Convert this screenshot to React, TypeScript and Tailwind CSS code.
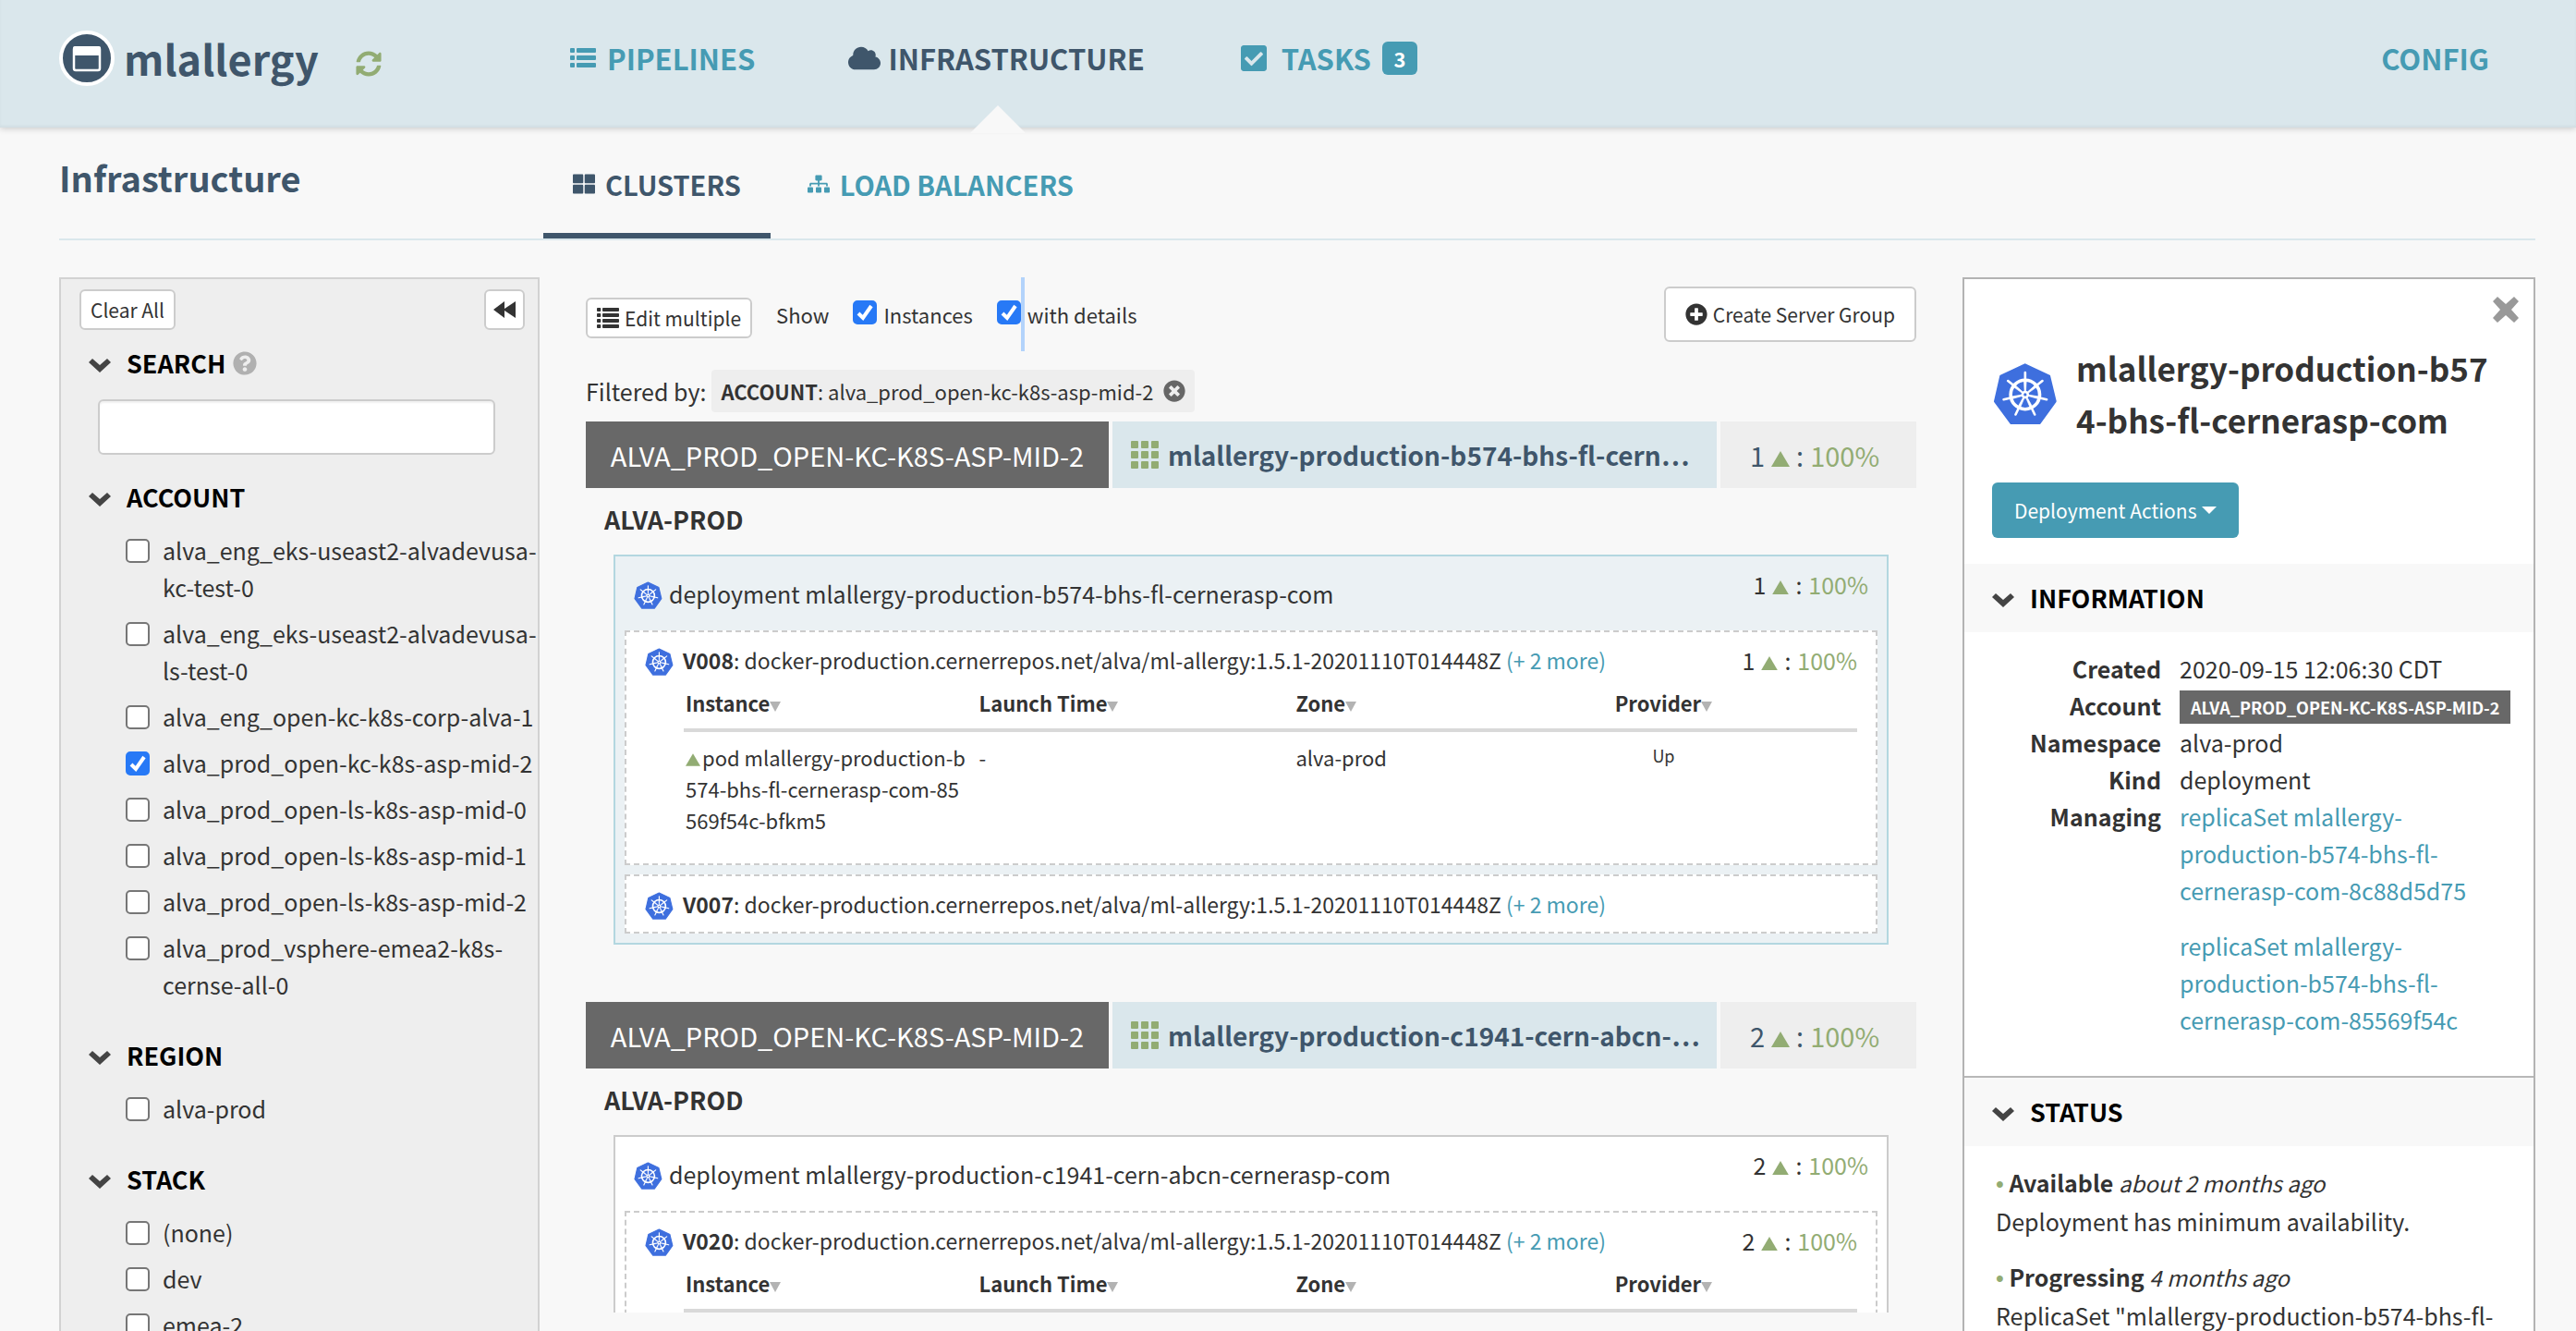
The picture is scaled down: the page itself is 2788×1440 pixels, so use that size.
import React from "react";
import { FaCheckSquare, FaCloud, FaPlusCircle, FaQuestionCircle, FaSitemap, FaSyncAlt, FaThLarge, FaTimesCircle } from "react-icons/fa";

function KubeIcon({ className }: { className: string }) {
  const spokes = [0, 1, 2, 3, 4, 5, 6].map((i) => (i * 360) / 7);
  return (
    <svg viewBox="50 62 214 206" className={className} aria-hidden="true">
      <path
        d="M156 69 L236 107 L256 190 L204 262 L110 262 L57 190 L76 107 Z"
        fill="#3e6fde"
        stroke="#3e6fde"
        strokeWidth="8"
        strokeLinejoin="round"
      />
      <circle cx="156.500" cy="168" r="48" fill="none" stroke="#fff" strokeWidth="11" />
      {spokes.map((a) => (
        <g key={a} transform={`rotate(${a} 156.5 168)`}>
          <path d="M152.500 122 L160.500 122 L158.500 160 L154.500 160 Z" fill="#fff" stroke="#fff" strokeWidth="2" />
          <path d="M156.500 122 L156.500 95" stroke="#fff" strokeWidth="8" strokeLinecap="round" />
        </g>
      ))}
      <circle cx="156.500" cy="168" r="13" fill="#fff" />
      <circle cx="156.500" cy="168" r="5" fill="#3e6fde" />
    </svg>
  );
}

function Chevron() {
  return (
    <svg viewBox="0 0 24 20" className="h-5 w-6 shrink-0" fill="#444" aria-hidden="true">
      <path d="M0 9 L4 5 L12 12 L20 5 L24 9 L12 20 Z" />
    </svg>
  );
}

function ListIcon({ rows, className }: { rows: number; className: string }) {
  const pitch = rows === 3 ? 8 : 6;
  const bar = rows === 3 ? 5 : 4;
  return (
    <svg viewBox="0 0 28 22" preserveAspectRatio="none" className={className} fill="currentColor" aria-hidden="true">
      {Array.from({ length: rows }, (_, i) => (
        <g key={i}>
          <rect x="0" y={i * pitch} width="5" height={bar} rx="1" />
          <rect x="7" y={i * pitch} width="21" height={bar} rx="1" />
        </g>
      ))}
    </svg>
  );
}

function GridIcon() {
  return (
    <svg viewBox="0 0 30 30" className="size-[30px] shrink-0" fill="#92ac73" aria-hidden="true">
      {[0, 11, 22].map((y) => [0, 11, 22].map((x) => <rect key={`${x}-${y}`} x={x} y={y} width="8" height="8" rx="1" />))}
    </svg>
  );
}

function Triangle({ className }: { className: string }) {
  return (
    <svg viewBox="0 0 20 17" className={className} fill="#92ac73" aria-hidden="true">
      <path d="M10 0 L20 17 L0 17 Z" />
    </svg>
  );
}

function Check({ id, checked = false }: { id: string; checked?: boolean }) {
  return (
    <span className="relative block h-[26px] w-[26px] shrink-0">
      <input
        id={id}
        type="checkbox"
        defaultChecked={checked}
        className="peer block h-[26px] w-[26px] appearance-none rounded-[5px] border-2 border-[#767676] bg-white checked:border-[#2779f6] checked:bg-[#2779f6]"
      />
      <svg viewBox="0 0 26 26" className="pointer-events-none absolute inset-0 hidden size-[26px] peer-checked:block" aria-hidden="true">
        <path d="M6 14 L11 19 L20 6" fill="none" stroke="#fff" strokeWidth="4" />
      </svg>
    </span>
  );
}

function FilterSection({ title, children }: { title: string; children: React.ReactNode }) {
  return (
    <section className="pb-8">
      <SectionTitle title={title} />
      <div className="pt-3 pl-[70px]">{children}</div>
    </section>
  );
}

function SectionTitle({ title, children }: { title: string; children?: React.ReactNode }) {
  return (
    <h3 className="flex h-10 items-center pl-[30px] text-[27px] leading-10 font-bold text-black">
      <Chevron />
      <span className="ml-[17px]">{title}</span>
      {children}
    </h3>
  );
}

function FilterRow({ label, checked }: { label: string; checked?: boolean }) {
  const id = `filter-${label}`;
  return (
    <div className="flex items-start gap-[14px] py-[5px]">
      <div className="pt-[8px]">
        <Check id={id} checked={checked} />
      </div>
      <label htmlFor={id} className="min-w-0 leading-10">
        {label}
      </label>
    </div>
  );
}

function Health({ count, large = false }: { count: number; large?: boolean }) {
  return (
    <span className={large ? "flex items-baseline gap-[7px] text-[29px]" : "flex items-baseline gap-[7px] text-[25px]"}>
      <span>{count}</span>
      <Triangle className={large ? "h-[17px] w-5" : "h-[15px] w-[18px]"} />
      <span>:</span>
      <span className="text-[#92ac73]">100%</span>
    </span>
  );
}

type Instance = { name: string; launch: string; zone: string; provider: string };
type Version = { name: string; count?: number; instances?: Instance[] };
type Cluster = { title: string; name: string; count: number; selected: boolean; versions: Version[] };

const clusters: Cluster[] = [
  {
    title: "mlallergy-production-b574-bhs-fl-cern…",
    name: "mlallergy-production-b574-bhs-fl-cernerasp-com",
    count: 1,
    selected: true,
    versions: [
      {
        name: "V008",
        count: 1,
        instances: [
          { name: "pod mlallergy-production-b574-bhs-fl-cernerasp-com-85569f54c-bfkm5", launch: "-", zone: "alva-prod", provider: "Up" },
        ],
      },
      { name: "V007" },
    ],
  },
  {
    title: "mlallergy-production-c1941-cern-abcn-…",
    name: "mlallergy-production-c1941-cern-abcn-cernerasp-com",
    count: 2,
    selected: false,
    versions: [{ name: "V020", count: 2, instances: [] }],
  },
];

function HeadCell({ label, className }: { label: string; className: string }) {
  return (
    <th scope="col" className={className}>
      <span className="inline-flex items-baseline">
        {label}
        <svg viewBox="0 0 12 11" className="h-[11px] w-3" fill="#b3b3b3" aria-hidden="true">
          <path d="M0 0 L12 0 L6 11 Z" />
        </svg>
      </span>
    </th>
  );
}

function VersionBox({ version }: { version: Version }) {
  return (
    <div className="border-2 border-dashed border-[#ccc] bg-white">
      <div className="flex h-[60px] items-center px-5 text-[23px]">
        <KubeIcon className="mt-1 h-[30px] w-[31px] shrink-0" />
        <span className="ml-[10px]">
          <span className="font-bold">{version.name}</span>: docker-production.cernerrepos.net/alva/ml-allergy:1.5.1-20201110T014448Z{" "}
          <a href="#images" className="text-[#469bb3]">
            (+ 2 more)
          </a>
        </span>
        {version.count !== undefined && (
          <span className="ml-auto">
            <Health count={version.count} />
          </span>
        )}
      </div>
      {version.instances && (
        <div className="pr-5 pb-[30px] pl-[62px]">
          <table className="w-full table-fixed text-[22px]">
            <thead>
              <tr className="border-b-4 border-[#d9d9d9] text-left leading-8 font-bold">
                <HeadCell label="Instance" className="w-1/4 px-[2px] pb-3" />
                <HeadCell label="Launch Time" className="w-[27%] px-[2px] pb-3" />
                <HeadCell label="Zone" className="px-[2px] pb-3" />
                <HeadCell label="Provider" className="w-[33%] px-[2px] pb-3 text-center" />
              </tr>
            </thead>
            <tbody>
              {version.instances.map((row) => (
                <tr key={row.name} className="align-top leading-[34px]">
                  <td className="pt-[10px] pr-2 pl-[2px] break-all">
                    <Triangle className="mr-[2px] inline-block h-[14px] w-4 align-baseline" />
                    {row.name}
                  </td>
                  <td className="px-[2px] pt-[10px]">{row.launch}</td>
                  <td className="px-[2px] pt-[10px]">{row.zone}</td>
                  <td className="px-[2px] pt-[10px] text-center text-[18px] leading-[30px]">{row.provider}</td>
                </tr>
              ))}
            </tbody>
          </table>
        </div>
      )}
    </div>
  );
}

function ClusterGroup({ cluster }: { cluster: Cluster }) {
  return (
    <section className="pb-[62px]">
      <div className="grid h-[72px] grid-cols-[566fr_654fr_212fr] gap-1 text-[29px]">
        <div className="flex items-center justify-center bg-[#686868] whitespace-nowrap text-white">ALVA_PROD_OPEN-KC-K8S-ASP-MID-2</div>
        <div className="flex min-w-0 items-center gap-[10px] bg-[#dae7ec] px-5">
          <GridIcon />
          <h2 className="text-[28px] font-bold whitespace-nowrap text-[#3f566b]" title={cluster.name}>
            {cluster.title}
          </h2>
        </div>
        <div className="flex items-center bg-[#eee] pl-8 text-[#3f566b]">
          <Health count={cluster.count} large />
        </div>
      </div>
      <h3 className="mt-[14px] pl-5 text-[27px] leading-10 font-bold">ALVA-PROD</h3>
      <div
        className={
          cluster.selected
            ? "mx-[30px] mt-[18px] border-2 border-[#b3d7e0] bg-[#ebf1f4] px-[10px] pb-[10px]"
            : "mx-[30px] mt-[18px] border-2 border-[#ccc] bg-white px-[10px] pb-[10px]"
        }
      >
        <div className="flex h-20 items-center px-[10px]">
          <KubeIcon className="mt-1 h-[30px] w-[31px] shrink-0" />
          <span className="ml-[7px]">deployment {cluster.name}</span>
          <span className="mt-[10px] ml-auto self-start">
            <Health count={cluster.count} />
          </span>
        </div>
        <div className="grid gap-[10px]">
          {cluster.versions.map((v) => (
            <VersionBox key={v.name} version={v} />
          ))}
        </div>
      </div>
    </section>
  );
}

function DetailTitle({ title }: { title: string }) {
  return (
    <div className="flex h-[74px] items-center bg-[#f8f8f8]">
      <SectionTitle title={title} />
    </div>
  );
}

function Condition({ name, age, message }: { name: string; age: string; message: string }) {
  return (
    <li>
      <span className="font-['Liberation_Sans',sans-serif] text-[#92ac73]">•</span> <b>{name}</b> <i className="text-[24px]">{age}</i>
      <p>{message}</p>
    </li>
  );
}

const term = "text-right font-bold";

export default function App() {
  return (
    <div className="flex h-screen flex-col overflow-hidden bg-[#f8f8f8] font-['Noto_Sans_CJK_SC',sans-serif] text-[25px] leading-10 text-[#333]">
      <header className="relative flex h-[138px] shrink-0 items-center bg-[#dae7ec] pr-[94px] pb-3 pl-16 shadow-[0_1px_7px_rgba(0,0,0,0.2),inset_0_-2px_3px_rgba(0,0,0,0.04)]">
        <div className="flex w-[549px] shrink-0 items-center">
          <svg viewBox="0 0 60 60" className="size-[60px]" aria-hidden="true">
            <circle cx="30" cy="30" r="28" fill="#3f566b" stroke="#fff" strokeWidth="4" />
            <rect x="16" y="18.500" width="28" height="24.500" rx="2" fill="none" stroke="#fff" strokeWidth="2.500" />
            <path d="M15 19 a2 2 0 0 1 2 -2 h26 a2 2 0 0 1 2 2 v8 h-30 z" fill="#fff" />
          </svg>
          <h1 className="ml-[10px] text-[45px] leading-[60px] font-bold text-[#3f566b]">mlallergy</h1>
          <button type="button" aria-label="Refresh" className="mt-3 ml-10 text-[28px] text-[#92ac73]">
            <FaSyncAlt />
          </button>
        </div>
        <nav className="flex items-center gap-[100px] text-[31px] font-bold text-[#469bb3]">
          <a href="#pipelines" className="flex items-center gap-2">
            <span className="flex w-9 justify-center">
              <ListIcon rows={3} className="h-[22px] w-7" />
            </span>
            PIPELINES
          </a>
          <a href="#infrastructure" className="flex items-center gap-2 text-[#3f566b]">
            <span className="flex w-9 justify-center">
              <FaCloud className="h-[28px] w-[35px]" />
            </span>
            INFRASTRUCTURE
          </a>
          <a href="#tasks" className="flex items-center gap-3">
            <span className="flex w-9 justify-center">
              <FaCheckSquare className="size-8" />
            </span>
            TASKS
            <span className="flex h-9 w-[38px] items-center justify-center rounded-md bg-[#469bb3] text-[22px] font-bold text-white">3</span>
          </a>
        </nav>
        <svg viewBox="0 0 60 30" className="absolute -bottom-[6px] left-[1050px] h-[30px] w-[60px]" aria-hidden="true">
          <path d="M30 0 L60 30 L0 30 Z" fill="#f8f8f8" />
        </svg>
        <a href="#config" className="ml-auto text-[31px] font-bold text-[#469bb3]">
          CONFIG
        </a>
      </header>

      <div className="mr-11 ml-16 flex h-[122px] shrink-0 items-center border-b-2 border-[#dae7ec]">
        <h2 className="w-[524px] pb-3 text-[38px] leading-[60px] font-bold text-[#3f566b]">Infrastructure</h2>
        <nav className="flex gap-2 self-end text-[29px] font-bold">
          <a href="#clusters" className="flex h-28 items-center gap-[11px] border-b-6 border-[#3f566b] px-8 text-[#3f566b]">
            <FaThLarge className="size-6" />
            CLUSTERS
          </a>
          <a href="#load-balancers" className="flex h-28 items-center gap-[11px] border-b-6 border-transparent px-8 text-[#469bb3]">
            <FaSitemap className="size-6" />
            LOAD BALANCERS
          </a>
        </nav>
      </div>

      <div className="mt-10 mr-11 ml-16 flex min-h-0 flex-1 gap-[50px]">
        <aside className="w-[520px] shrink-0 overflow-hidden border-2 border-b-0 border-[#d2d2d2] bg-[#eee]">
          <div className="flex items-center justify-between pt-[11px] pr-[14px] pb-4 pl-5">
            <button type="button" className="h-11 rounded-md border-2 border-[#ccc] bg-white px-[10px] text-[21px] leading-9">
              Clear All
            </button>
            <button type="button" aria-label="Collapse filters" className="flex h-11 w-11 items-center justify-center rounded-md border-2 border-[#ccc] bg-white">
              <svg viewBox="0 0 24 18" className="h-[18px] w-6" fill="#333" aria-hidden="true">
                <path d="M0 9 L12 0 V8 L24 0 V18 L12 10 V18 Z" />
              </svg>
            </button>
          </div>
          <section className="pb-[26px]">
            <SectionTitle title="SEARCH">
              <FaQuestionCircle className="ml-2 size-[26px] text-[#b0b0b0]" />
            </SectionTitle>
            <div className="mt-[19px] mr-[46px] ml-10">
              <input
                type="text"
                aria-label="Search"
                className="block h-[60px] w-full rounded-md border-2 border-[#ccc] bg-white px-4 shadow-[inset_0_2px_2px_rgba(0,0,0,0.06)]"
              />
            </div>
          </section>
          <FilterSection title="ACCOUNT">
            <FilterRow label="alva_eng_eks-useast2-alvadevusa-kc-test-0" />
            <FilterRow label="alva_eng_eks-useast2-alvadevusa-ls-test-0" />
            <FilterRow label="alva_eng_open-kc-k8s-corp-alva-1" />
            <FilterRow label="alva_prod_open-kc-k8s-asp-mid-2" checked />
            <FilterRow label="alva_prod_open-ls-k8s-asp-mid-0" />
            <FilterRow label="alva_prod_open-ls-k8s-asp-mid-1" />
            <FilterRow label="alva_prod_open-ls-k8s-asp-mid-2" />
            <FilterRow label="alva_prod_vsphere-emea2-k8s-cernse-all-0" />
          </FilterSection>
          <FilterSection title="REGION">
            <FilterRow label="alva-prod" />
          </FilterSection>
          <FilterSection title="STACK">
            <FilterRow label="(none)" />
            <FilterRow label="dev" />
            <FilterRow label="emea-2" />
          </FilterSection>
        </aside>

        <main className="mb-5 min-w-0 flex-1 overflow-hidden">
          <div className="flex h-20 items-center gap-[26px] text-[22px]">
            <button type="button" className="mt-2 flex h-11 items-center gap-[6px] rounded-md border-2 border-[#ccc] bg-white px-[10px] text-[21px]">
              <ListIcon rows={4} className="h-[22px] w-6" />
              Edit multiple
            </button>
            <span>Show</span>
            <span className="flex items-center gap-[7px]">
              <span className="pb-1">
                <Check id="show-instances" checked />
              </span>
              <label htmlFor="show-instances">Instances</label>
            </span>
            <span className="relative flex items-center gap-[7px]">
              <span className="pb-1">
                <Check id="show-details" checked />
              </span>
              <span className="absolute top-1/2 left-[26px] h-20 w-1 -translate-y-1/2 bg-[#b3d3fb]" />
              <label htmlFor="show-details">with details</label>
            </span>
            <button type="button" className="ml-auto flex h-[60px] items-center gap-[6px] rounded-md border-2 border-[#ccc] bg-white px-[21px] text-[21px]">
              <FaPlusCircle className="size-6" />
              Create Server Group
            </button>
          </div>
          <div className="mt-5 mb-[10px] flex h-[46px] items-center gap-[6px]">
            <span>Filtered by:</span>
            <span className="flex h-[46px] items-center rounded bg-[#eee] px-[10px] text-[22px]">
              <span>
                <span className="font-bold">ACCOUNT</span>: alva_prod_open-kc-k8s-asp-mid-2
              </span>
              <button type="button" aria-label="Remove filter" className="ml-[11px] text-[#666]">
                <FaTimesCircle className="size-6" />
              </button>
            </span>
          </div>
          {clusters.map((c) => (
            <ClusterGroup key={c.name} cluster={c} />
          ))}
        </main>

        <aside className="w-[620px] shrink-0 overflow-hidden border-2 border-b-0 border-[#b3b3b3] bg-white">
          <div className="flex justify-end pt-[18px] pr-[15px]">
            <button type="button" aria-label="Close">
              <svg viewBox="0 0 30 30" className="size-[30px]" fill="#999" aria-hidden="true">
                <path d="M6 1 L15 9 L24 1 L29 6 L21 15 L29 24 L24 29 L15 21 L6 29 L1 24 L9 15 L1 6 Z" />
              </svg>
            </button>
          </div>
          <div className="mt-5 flex items-center gap-5 pr-10 pl-[31px]">
            <KubeIcon className="h-[68px] w-[70px] shrink-0" />
            <h2 className="text-[35px] leading-[56px] font-bold break-all">mlallergy-production-b574-bhs-fl-cernerasp-com</h2>
          </div>
          <button type="button" className="mt-10 mb-7 ml-[30px] flex h-[60px] items-center gap-[6px] rounded-md bg-[#469bb3] px-6 text-[21px] text-white">
            Deployment Actions
            <svg viewBox="0 0 16 8" className="h-2 w-4" fill="#fff" aria-hidden="true">
              <path d="M0 0 H16 L8 8 Z" />
            </svg>
          </button>
          <DetailTitle title="INFORMATION" />
          <dl className="grid grid-cols-[213px_1fr] gap-x-5 border-b-2 border-[#b8b8b8] pt-[19px] pr-[18px] pb-[41px]">
            <dt className={term}>Created</dt>
            <dd>2020-09-15 12:06:30 CDT</dd>
            <dt className={term}>Account</dt>
            <dd className="flex h-10 items-end">
              <span className="bg-[#686868] px-3 text-[18px] leading-9 font-bold whitespace-nowrap text-white">ALVA_PROD_OPEN-KC-K8S-ASP-MID-2</span>
            </dd>
            <dt className={term}>Namespace</dt>
            <dd>alva-prod</dd>
            <dt className={term}>Kind</dt>
            <dd>deployment</dd>
            <dt className={term}>Managing</dt>
            <dd className="grid gap-5 text-[#469bb3]">
              <a href="#replica-set-1">replicaSet mlallergy-production-b574-bhs-fl-cernerasp-com-8c88d5d75</a>
              <a href="#replica-set-2">replicaSet mlallergy-production-b574-bhs-fl-cernerasp-com-85569f54c</a>
            </dd>
          </dl>
          <DetailTitle title="STATUS" />
          <ul className="grid gap-5 px-[34px] pt-[19px]">
            <Condition name="Available" age="about 2 months ago" message="Deployment has minimum availability." />
            <Condition
              name="Progressing"
              age="4 months ago"
              message={'ReplicaSet "mlallergy-production-b574-bhs-fl-cernerasp-com-85569f54c" has successfully progressed.'}
            />
          </ul>
        </aside>
      </div>
    </div>
  );
}
